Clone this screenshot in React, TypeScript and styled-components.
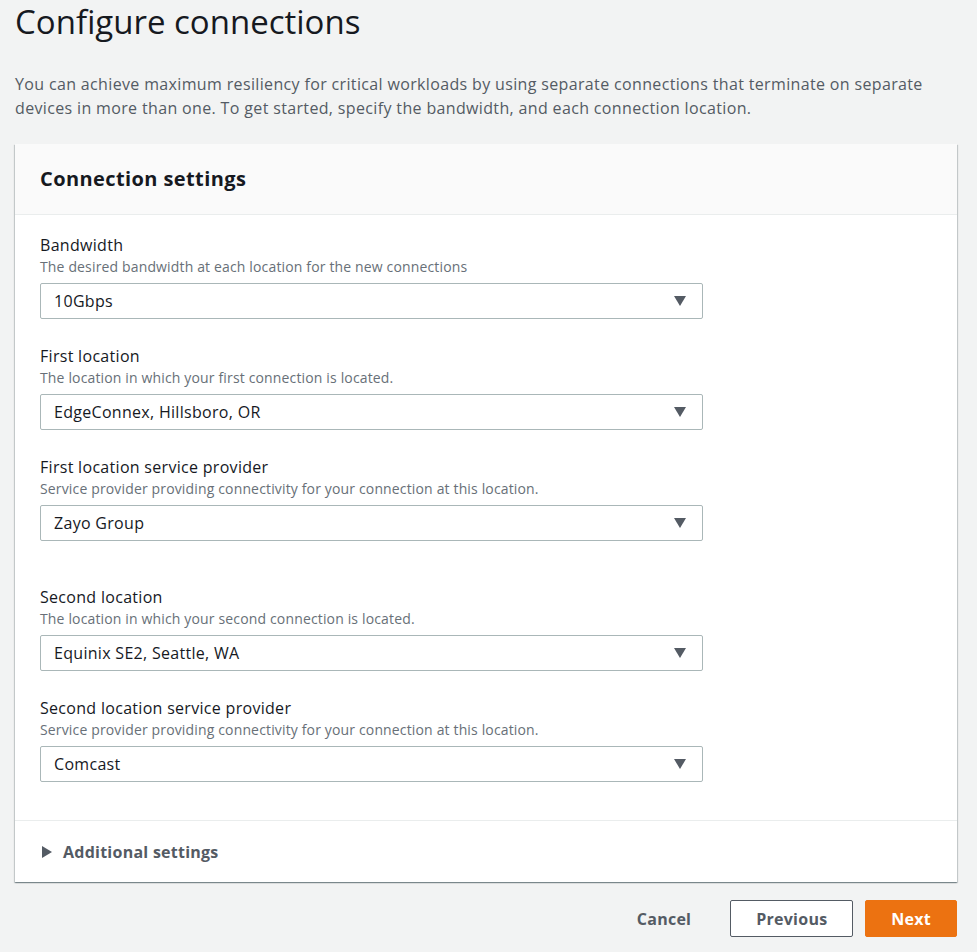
import React from "react";
import styled, { createGlobalStyle } from "styled-components";

const Global = createGlobalStyle`
  html, body { margin: 0; padding: 0; background: #f2f3f3; }
  body { font-family: "Open Sans", "Noto Sans", Arial, sans-serif; color: #16191f; }
  * { box-sizing: border-box; }
`;

const Page = styled.div`
  padding: 0 20px 0 15px;
  width: 977px;
  min-height: 952px;
  background: #f2f3f3;
`;

const Title = styled.h1`
  margin: 0;
  font-size: 33px;
  line-height: 44px;
  font-weight: 400;
  color: #16191f;
`;

const Intro = styled.p`
  margin: 28px 0 24px;
  font-size: 16px;
  line-height: 24px;
  letter-spacing: 0.35px;
  color: #545b64;
`;

const Card = styled.section`
  background: #fff;
  box-shadow: 0 1px 1px 0 rgba(0, 28, 36, 0.3), 1px 1px 1px 0 rgba(0, 28, 36, 0.15),
    -1px 1px 1px 0 rgba(0, 28, 36, 0.15);
`;

const CardHeader = styled.header`
  height: 71px;
  display: flex;
  align-items: center;
  padding: 0 25px;
  background: #fafafa;
  border-bottom: 1px solid #eaeded;
`;

const CardTitle = styled.h2`
  margin: 0;
  font-size: 20px;
  font-weight: 700;
  line-height: 28px;
  letter-spacing: 0.4px;
  color: #16191f;
`;

const CardBody = styled.div`
  padding: 19px 25px 38px;
  display: flex;
  flex-direction: column;
`;

const Group = styled.div`
  display: flex;
  flex-direction: column;
  gap: 26px;
  & + & { margin-top: 45px; }
`;

const Field = styled.div`
  display: flex;
  flex-direction: column;
`;

const Label = styled.label`
  font-size: 16px;
  line-height: 22px;
  letter-spacing: 0.3px;
  color: #16191f;
`;

const Hint = styled.div`
  font-size: 14px;
  line-height: 22px;
  letter-spacing: 0.15px;
  color: #687078;
  margin-bottom: 5px;
`;

const Select = styled.div`
  width: 663px;
  height: 36px;
  border: 1px solid #aab7b8;
  border-radius: 2px;
  background: #fff;
  display: flex;
  align-items: center;
  justify-content: space-between;
  padding: 0 16px 0 13px;
  font-size: 16px;
  letter-spacing: 0.3px;
  color: #16191f;
`;

const Caret = styled.svg`
  width: 12px;
  height: 10px;
  fill: #545b64;
`;

const Expander = styled.div`
  border-top: 1px solid #eaeded;
  height: 62px;
  display: flex;
  align-items: center;
  gap: 11px;
  padding: 0 27px;
  font-size: 16px;
  font-weight: 700;
  letter-spacing: 0.25px;
  color: #545b64;
`;

const Footer = styled.div`
  display: flex;
  justify-content: flex-end;
  align-items: center;
  gap: 12px;
  padding-top: 18px;
`;

const Button = styled.button<{ $variant: "link" | "normal" | "primary" }>`
  height: 37px;
  padding: 0 25px;
  border-radius: 2px;
  font-family: inherit;
  font-size: 16px;
  font-weight: 700;
  letter-spacing: 0.25px;
  cursor: pointer;
  border: 1px solid
    ${(p) => (p.$variant === "normal" ? "#545b64" : p.$variant === "primary" ? "#ec7211" : "transparent")};
  background: ${(p) => (p.$variant === "primary" ? "#ec7211" : p.$variant === "normal" ? "#fff" : "transparent")};
  color: ${(p) => (p.$variant === "primary" ? "#fff" : "#545b64")};
  ${(p) => (p.$variant === "link" ? "padding: 0 22px; margin-right: 4px;" : "")}
`;

const fieldsA = [
  { label: "Bandwidth", hint: "The desired bandwidth at each location for the new connections", value: "10Gbps" },
  { label: "First location", hint: "The location in which your first connection is located.", value: "EdgeConnex, Hillsboro, OR" },
  {
    label: "First location service provider",
    hint: "Service provider providing connectivity for your connection at this location.",
    value: "Zayo Group",
  },
];
const fieldsB = [
  { label: "Second location", hint: "The location in which your second connection is located.", value: "Equinix SE2, Seattle, WA" },
  {
    label: "Second location service provider",
    hint: "Service provider providing connectivity for your connection at this location.",
    value: "Comcast",
  },
];

function SelectField({ label, hint, value }: { label: string; hint: string; value: string }) {
  return (
    <Field>
      <Label>{label}</Label>
      <Hint>{hint}</Hint>
      <Select>
        <span>{value}</span>
        <Caret viewBox="0 0 12 10">
          <polygon points="0,0 12,0 6,10" />
        </Caret>
      </Select>
    </Field>
  );
}

export default function App() {
  return (
    <>
      <Global />
      <Page>
        <Title>Configure connections</Title>
        <Intro>
          You can achieve maximum resiliency for critical workloads by using separate connections that terminate on separate
          devices in more than one. To get started, specify the bandwidth, and each connection location.
        </Intro>
        <Card>
          <CardHeader>
            <CardTitle>Connection settings</CardTitle>
          </CardHeader>
          <CardBody>
            <Group>
              {fieldsA.map((f) => (
                <SelectField key={f.label} {...f} />
              ))}
            </Group>
            <Group>
              {fieldsB.map((f) => (
                <SelectField key={f.label} {...f} />
              ))}
            </Group>
          </CardBody>
          <Expander>
            <svg width="10" height="12" viewBox="0 0 10 12">
              <polygon points="0,0 10,6 0,12" fill="#545b64" />
            </svg>
            Additional settings
          </Expander>
        </Card>
        <Footer>
          <Button $variant="link">Cancel</Button>
          <Button $variant="normal">Previous</Button>
          <Button $variant="primary">Next</Button>
        </Footer>
      </Page>
    </>
  );
}
